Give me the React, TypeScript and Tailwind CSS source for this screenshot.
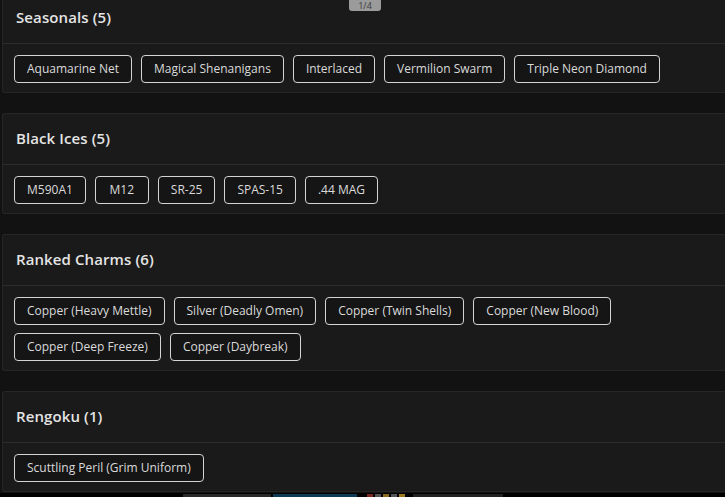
const groups = [
  {
    title: "Seasonals",
    items: [
      "Aquamarine Net",
      "Magical Shenanigans",
      "Interlaced",
      "Vermilion Swarm",
      "Triple Neon Diamond",
    ],
  },
  {
    title: "Black Ices",
    items: ["M590A1", "M12", "SR-25", "SPAS-15", ".44 MAG"],
  },
  {
    title: "Ranked Charms",
    items: [
      "Copper (Heavy Mettle)",
      "Silver (Deadly Omen)",
      "Copper (Twin Shells)",
      "Copper (New Blood)",
      "Copper (Deep Freeze)",
      "Copper (Daybreak)",
    ],
  },
  {
    title: "Rengoku",
    items: ["Scuttling Peril (Grim Uniform)"],
  },
];

function Group({ title, items }: { title: string; items: string[] }) {
  return (
    <section className="bg-[#1a1a1a] border border-[#262626] border-r-0 rounded-l-[3px]">
      <div className="h-[51px] flex items-center px-[13px] border-b border-[#2c2c2c]">
        <h2 className="text-[15px] font-semibold text-[#e4e4e4] tracking-[0.1px] -mt-[2px]">
          {title} ({items.length})
        </h2>
      </div>
      <div className="flex flex-wrap gap-x-[9px] gap-y-[8px] px-[11px] pt-[11px] pb-[9px]">
        {items.map((it) => (
          <span
            key={it}
            className="inline-flex h-[28px] min-w-[54px] items-center justify-center px-[12px] rounded-[4px] border-[1.5px] border-[#d4d4d4] bg-[#151515] text-[12px] text-[#dadada] font-medium"
          >
            {it}
          </span>
        ))}
      </div>
    </section>
  );
}

export default function App() {
  return (
    <div
      className="relative min-h-screen bg-[#121212] overflow-hidden"
      style={{ fontFamily: "'Open Sans', 'Noto Sans', sans-serif" }}
    >
      <div className="flex flex-col gap-[20px] pl-[2px] mt-[-8px]">
        {groups.map((g) => (
          <Group key={g.title} title={g.title} items={g.items} />
        ))}
      </div>

      {/* page counter */}
      <div className="absolute top-0 left-[349px] w-[32px] h-[11px] rounded-b-[3px] bg-[#9b9b9b] text-[#3a3a3a] text-[9px] leading-[11px] text-center">
        1/4
      </div>

      {/* taskbar strip */}
      <div className="fixed bottom-0 left-0 right-0 h-[4px] bg-black flex items-end gap-[2px] pl-[183px]">
        <div className="w-[88px] h-[3px] bg-[#2a2a2a]" />
        <div className="w-[84px] h-[3px] bg-[#0d3b55]" />
        <div className="w-[6px] h-[3px] bg-[#7a2a20] ml-[8px]" />
        <div className="w-[6px] h-[3px] bg-[#555]" />
        <div className="w-[6px] h-[3px] bg-[#8a6a20]" />
        <div className="w-[6px] h-[3px] bg-[#555]" />
        <div className="w-[6px] h-[3px] bg-[#a07820]" />
        <div className="w-[90px] h-[3px] bg-[#222] ml-[6px]" />
      </div>
    </div>
  );
}
